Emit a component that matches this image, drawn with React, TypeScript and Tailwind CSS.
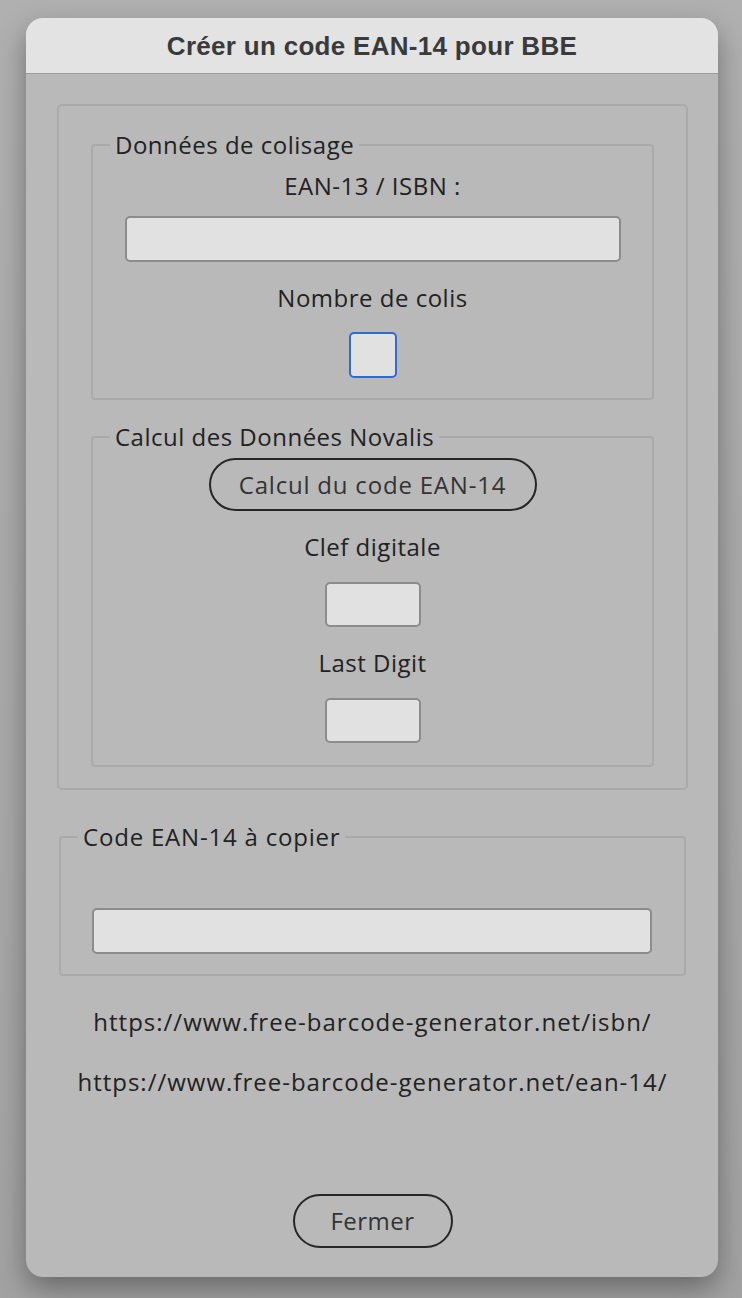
import React from "react";

const font = { fontFamily: '"Open Sans", "Noto Sans", sans-serif' };

function Field({ className }: { className: string }) {
  return <div className={`rounded-[5px] border-2 border-[#8c8c8c] bg-[#e1e1e1] ${className}`} />;
}

export default function App() {
  return (
    <div
      className="w-[742px] h-[1298px] bg-gradient-to-b from-[#b0b0b0] to-[#a2a2a2] pt-[18px] pl-[26px] text-[#222]"
      style={font}
    >
      <div className="w-[692px] h-[1259px] rounded-[17px] bg-[#b9b9b9] shadow-[0_12px_28px_rgba(0,0,0,0.35)] overflow-hidden flex flex-col">
        <div className="h-[56px] bg-[#e3e3e3] border-b border-[#9c9c9c] flex items-center justify-center">
          <span
            className="text-[26px] font-bold text-[#3a3a3a] leading-none tracking-[0.3px]"
            style={{ fontFamily: '"Liberation Sans", Arial, sans-serif' }}
          >
            Créer un code EAN-14 pour BBE
          </span>
        </div>

        <div className="flex flex-col pl-[31px] pt-[30px]">
          {/* outer box */}
          <div className="w-[631px] h-[686px] rounded-[5px] border-2 border-[#aaaaaa] flex flex-col pl-[32px] pt-[25px]">
            <fieldset className="w-[563px] h-[269px] rounded-[4px] border-2 border-[#aaaaaa] flex flex-col items-center">
              <legend className="ml-[17px] px-[5px] text-[24px] leading-[28px] tracking-[0.5px]">Données de colisage</legend>
              <div className="text-[24px] leading-[28px] mt-[13px] tracking-[0.5px]">EAN-13 / ISBN :</div>
              <Field className="w-[496px] h-[46px] mt-[16px]" />
              <div className="text-[24px] leading-[28px] mt-[22px] tracking-[0.5px]">Nombre de colis</div>
              <div className="w-[48px] h-[46px] mt-[20px] rounded-[5px] border-2 border-[#2f6bd0] bg-[#e1e1e1]" />
            </fieldset>

            <fieldset className="w-[563px] h-[344px] mt-[23px] rounded-[4px] border-2 border-[#aaaaaa] flex flex-col items-center">
              <legend className="ml-[17px] px-[5px] text-[24px] leading-[28px] tracking-[0.5px]">Calcul des Données Novalis</legend>
              <button className="w-[328px] h-[53px] mt-[7px] rounded-full border-2 border-[#262626] text-[24px] text-[#333] leading-none bg-transparent tracking-[0.8px]">
                Calcul du code EAN-14
              </button>
              <div className="text-[24px] leading-[28px] mt-[22px] tracking-[0.5px]">Clef digitale</div>
              <Field className="w-[96px] h-[45px] mt-[21px]" />
              <div className="text-[24px] leading-[28px] mt-[22px] tracking-[0.5px]">Last Digit</div>
              <Field className="w-[96px] h-[45px] mt-[21px]" />
            </fieldset>
          </div>

          {/* EAN-14 box */}
          <fieldset className="w-[627px] h-[153px] ml-[2px] mt-[33px] rounded-[4px] border-2 border-[#aaaaaa] flex flex-col">
            <legend className="ml-[17px] px-[5px] text-[24px] leading-[28px] tracking-[0.8px]">Code EAN-14 à copier</legend>
            <Field className="w-[560px] h-[46px] ml-[31px] mt-[57px]" />
          </fieldset>

          <div className="w-[631px] flex flex-col items-center text-[24px] leading-[28px] mt-[32px] tracking-[1px]">
            <div>https://www.free-barcode-generator.net/isbn/</div>
            <div className="mt-[32px]">https://www.free-barcode-generator.net/ean-14/</div>
          </div>

          <div className="w-[631px] flex justify-center mt-[98px]">
            <button className="w-[160px] h-[54px] rounded-full border-2 border-[#262626] text-[24px] text-[#333] leading-none bg-transparent tracking-[0.5px]">
              Fermer
            </button>
          </div>
        </div>
      </div>
    </div>
  );
}
